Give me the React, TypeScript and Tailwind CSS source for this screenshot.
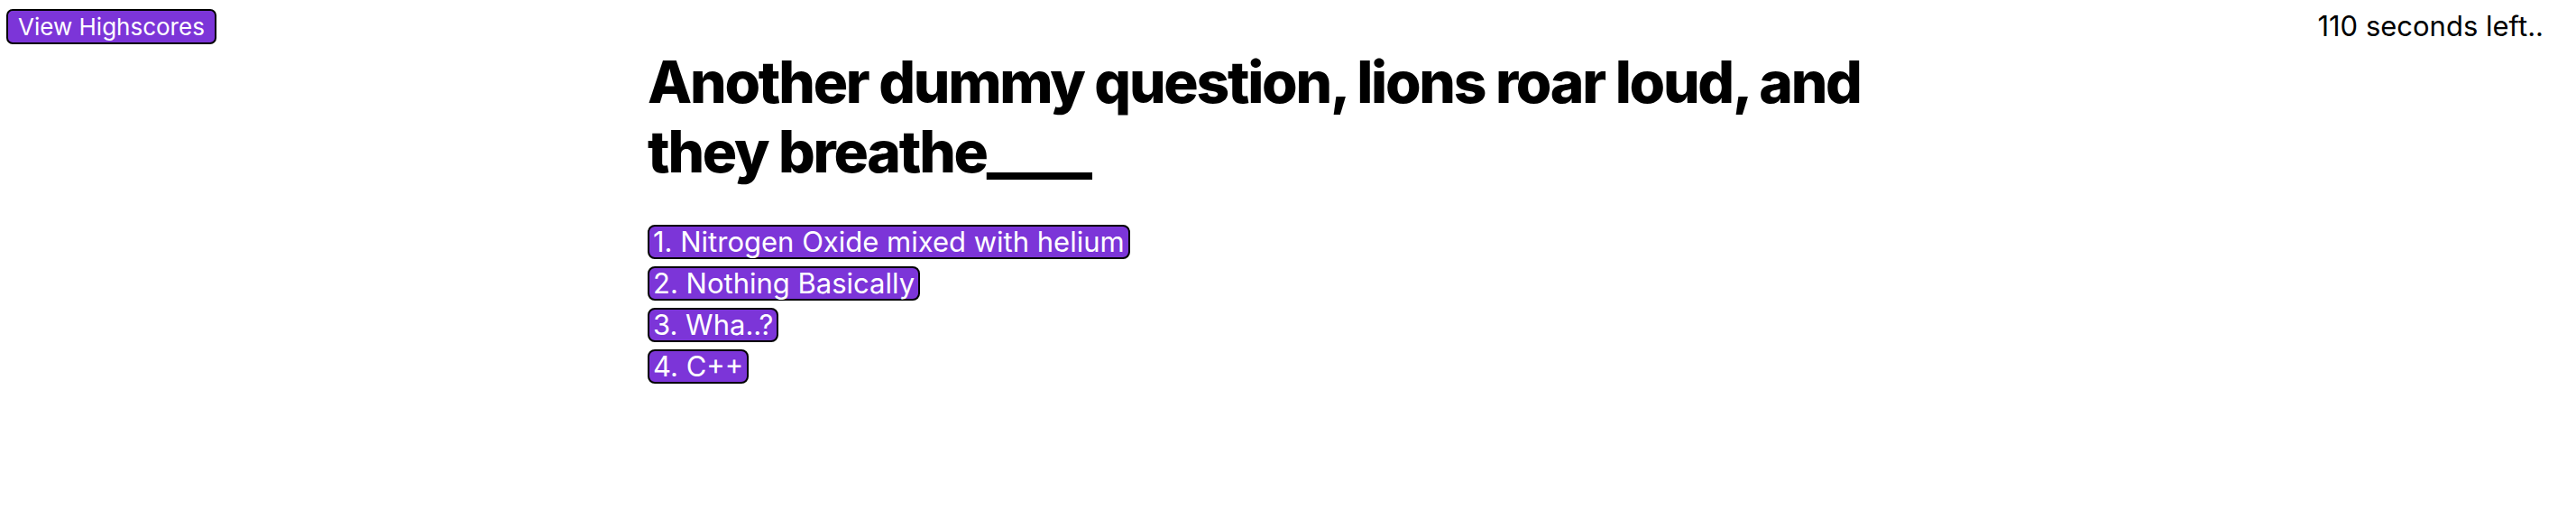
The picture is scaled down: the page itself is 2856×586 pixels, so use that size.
import React from 'react';

const answers = [
  '1. Nitrogen Oxide mixed with helium',
  '2. Nothing Basically',
  '3. Wha..?',
  '4. C++',
];

const App = () => {
  return (
    <div className="min-h-[586px] bg-white text-black" style={{ fontFamily: 'Inter, "Liberation Sans", sans-serif' }}>
      {/* Header */}
      <header className="flex items-start justify-between pl-[7px] pr-[36px] pt-[10px] h-[49px]">
        <button className="h-[39px] px-[11px] bg-[#7c35d8] text-white text-[26px] leading-none border-2 border-black rounded-[7px]">
          View Highscores
        </button>
        <div className="pt-[1px] text-[31px] leading-[36px]">110 seconds left..</div>
      </header>

      {/* Question */}
      <main className="w-[1420px] mx-auto">
        <h1 className="text-[64px] font-extrabold leading-[77px] tracking-[-0.035em] mt-[3px]">
          Another dummy question, lions roar loud, and they breathe____
        </h1>
        <div className="flex flex-col items-start gap-[8px] mt-[43px]">
          {answers.map((answer, index) => (
            <button
              key={index}
              className="h-[38px] px-[4px] bg-[#7c35d8] text-white text-[31px] leading-[34px] border-2 border-black rounded-[8px] whitespace-nowrap"
            >
              {answer}
            </button>
          ))}
        </div>
      </main>
    </div>
  );
};

export default App;
